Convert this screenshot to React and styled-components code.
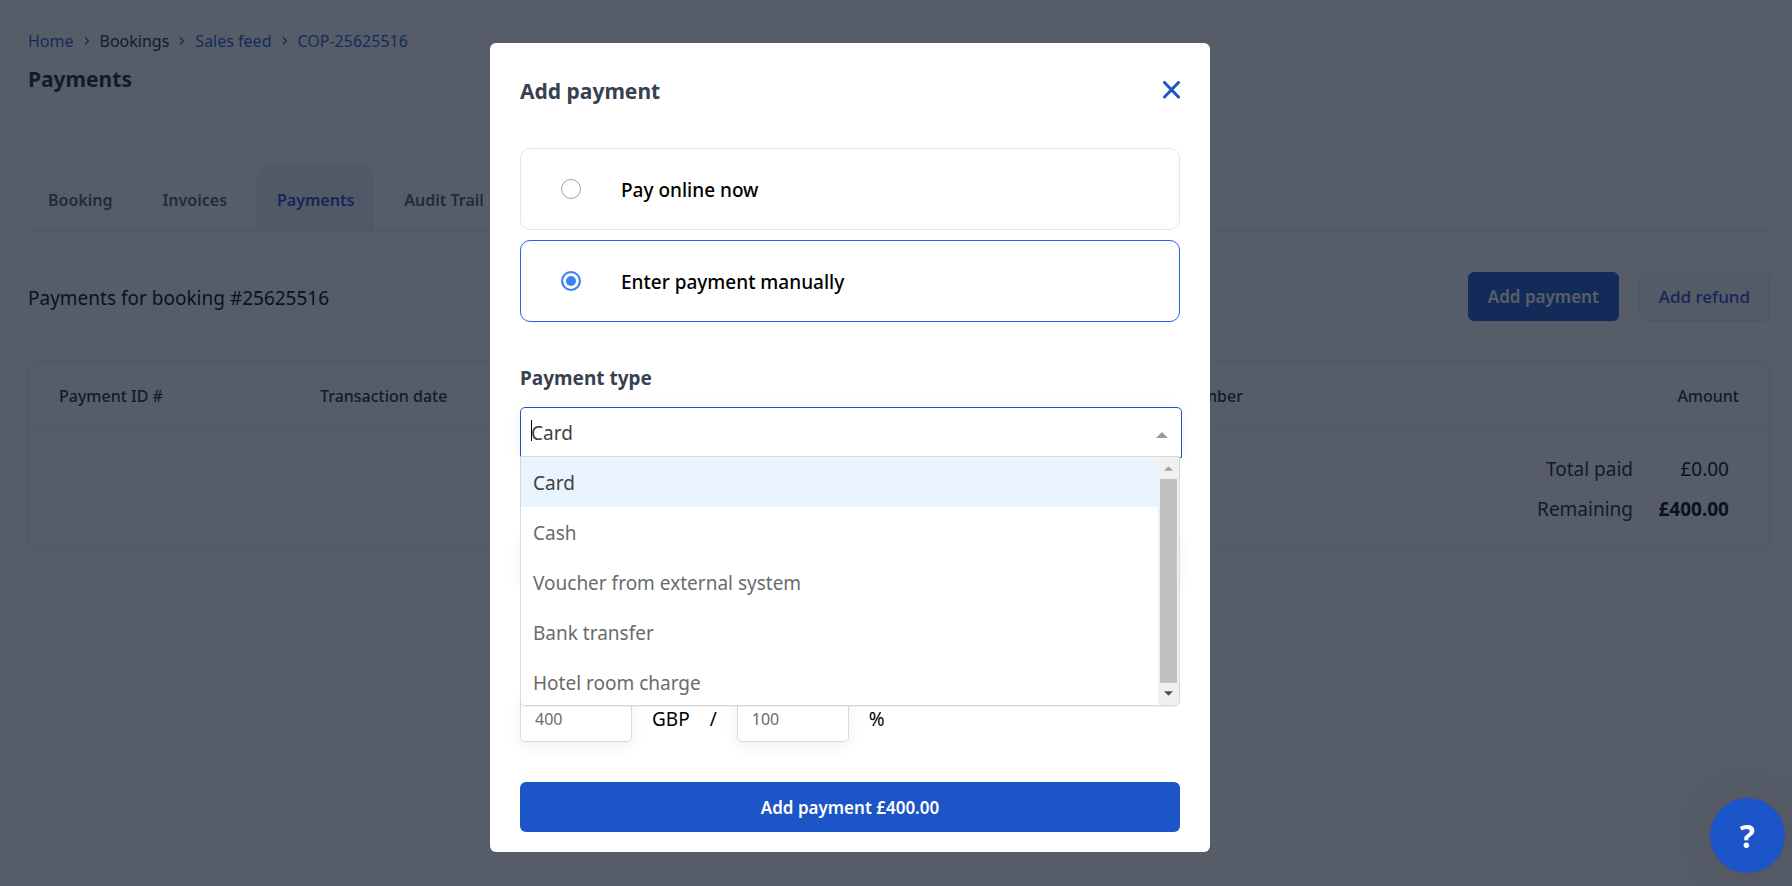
import React from "react";
import styled, { createGlobalStyle } from "styled-components";

const paymentTypes = [
  "Card",
  "Cash",
  "Voucher from external system",
  "Bank transfer",
  "Hotel room charge",
];

const Chevron = () => (
  <ChevronIcon viewBox="0 0 6 10" aria-hidden="true">
    <path d="M1 1.5L4.5 5L1 8.5" />
  </ChevronIcon>
);

export default function App() {
  return (
    <>
      <GlobalStyle />
      <Page>
        <PageHeader>
          <Breadcrumbs aria-label="Breadcrumb">
            <CrumbLink href="#home">Home</CrumbLink>
            <Chevron />
            <Crumb>Bookings</Crumb>
            <Chevron />
            <CrumbLink href="#sales">Sales feed</CrumbLink>
            <Chevron />
            <CrumbLink href="#booking">COP-25625516</CrumbLink>
          </Breadcrumbs>
          <PageTitle>Payments</PageTitle>
        </PageHeader>
        <Content>
          <Tabs>
            <Tab href="#booking">Booking</Tab>
            <Tab href="#invoices">Invoices</Tab>
            <Tab href="#payments" $active>
              Payments
            </Tab>
            <Tab href="#audit">Audit Trail</Tab>
          </Tabs>
          <Toolbar>
            <ToolbarText>Payments for booking #25625516</ToolbarText>
            <ToolbarButton type="button" $primary>
              Add payment
            </ToolbarButton>
            <ToolbarButton type="button">Add refund</ToolbarButton>
          </Toolbar>
          <TableCard>
            <Table>
              <colgroup>
                <Col $width="15%" />
                <Col $width="30%" />
                <Col />
                <Col $width="360px" />
                <Col $width="136px" />
              </colgroup>
              <thead>
                <tr>
                  <HeadCell>Payment ID #</HeadCell>
                  <HeadCell>Transaction date</HeadCell>
                  <HeadCell $right>Card number</HeadCell>
                  <HeadCell aria-hidden="true" />
                  <HeadCell $right>Amount</HeadCell>
                </tr>
              </thead>
              <tbody>
                <tr>
                  <TotalLabel colSpan={4} scope="row">
                    Total paid
                  </TotalLabel>
                  <TotalValue>£0.00</TotalValue>
                </tr>
                <tr>
                  <TotalLabel colSpan={4} scope="row">
                    Remaining
                  </TotalLabel>
                  <TotalValue $bold>£400.00</TotalValue>
                </tr>
              </tbody>
            </Table>
          </TableCard>
        </Content>
      </Page>

      <Overlay>
        <Modal role="dialog" aria-modal="true" aria-labelledby="modal-title">
          <ModalHeader>
            <ModalTitle id="modal-title">Add payment</ModalTitle>
            <CloseButton type="button" aria-label="Close">
              <svg width="18" height="18" viewBox="0 0 18 18" aria-hidden="true">
                <path d="M2.5 1.5L16.5 16M16.5 1.5L2.5 16" />
              </svg>
            </CloseButton>
          </ModalHeader>
          <Options>
            <Option>
              <Radio type="radio" name="method" />
              <OptionText>Pay online now</OptionText>
            </Option>
            <Option $selected>
              <Radio type="radio" name="method" defaultChecked />
              <OptionText>Enter payment manually</OptionText>
            </Option>
          </Options>
          <FieldLabel htmlFor="payment-type">Payment type</FieldLabel>
          <Combo>
            <ComboInput
              id="payment-type"
              role="combobox"
              aria-expanded="true"
              aria-controls="payment-type-list"
              defaultValue="Card"
            />
            <Caret />
            <ComboArrow viewBox="0 0 12 6" aria-hidden="true">
              <path d="M0 6L6 0L12 6Z" />
            </ComboArrow>
            <Menu>
              <MenuList id="payment-type-list" role="listbox">
                {paymentTypes.map((type, i) => (
                  <MenuItem
                    key={type}
                    role="option"
                    aria-selected={i === 0}
                    $active={i === 0}
                  >
                    {type}
                  </MenuItem>
                ))}
              </MenuList>
              <Scrollbar>
                <ScrollArrow viewBox="0 0 10 5" $color="#a3a3a3">
                  <path d="M0 5L5 0L10 5Z" />
                </ScrollArrow>
                <Thumb />
                <ScrollArrow viewBox="0 0 10 5" $color="#505050">
                  <path d="M0 0L5 5L10 0Z" />
                </ScrollArrow>
              </Scrollbar>
            </Menu>
          </Combo>
          <ReferenceInput aria-label="Reference" />
          <AmountRow>
            <AmountInput aria-label="Amount in GBP" defaultValue="400" />
            <AmountText>GBP</AmountText>
            <AmountText>/</AmountText>
            <AmountInput aria-label="Amount in percent" defaultValue="100" />
            <AmountText>%</AmountText>
          </AmountRow>
          <SubmitButton type="button">Add payment £400.00</SubmitButton>
        </Modal>
      </Overlay>
      <HelpButton type="button" aria-label="Help">
        ?
      </HelpButton>
    </>
  );
}

const GlobalStyle = createGlobalStyle`
  *, *::before, *::after {
    box-sizing: border-box;
  }
  body {
    margin: 0;
    background-color: #fafbfc;
    color: #000000;
    font-family: "Noto Sans", "Open Sans", sans-serif;
    font-size: 19px;
    line-height: 24px;
  }
  button, input {
    font: inherit;
  }
`;
const Page = styled.div`
  min-height: 100vh;
`;
const PageHeader = styled.header`
  padding: 29px 28px 33px;
  border-bottom: 1px solid #f4f5f7;
  box-shadow: 0 2px 8px rgba(0, 0, 0, 0.03);
`;
const Breadcrumbs = styled.nav`
  display: flex;
  align-items: center;
  gap: 10px;
  font-size: 16px;
`;
const Crumb = styled.span`
  color: #1a202c;
`;
const CrumbLink = styled.a`
  color: #1c55c7;
  text-decoration: none;
`;
const ChevronIcon = styled.svg`
  width: 6px;
  height: 10px;
  fill: none;
  stroke: #4a5568;
  stroke-width: 1.3;
`;
const PageTitle = styled.h1`
  margin: 12px 0 0;
  color: #1a202c;
  font-size: 21px;
  font-weight: 700;
  line-height: 28px;
`;
const Content = styled.main`
  padding: 39px 22px 0 28px;
`;
const Tabs = styled.nav`
  display: flex;
  gap: 10px;
  border-bottom: 1px solid #e2e8f0;
`;
const Tab = styled.a`
  padding: 22px 20px 19px;
  border-radius: 10px 10px 0 0;
  background-color: ${(p) => (p.$active ? "#eceef8" : "transparent")};
  color: ${(p) => (p.$active ? "#1c45c7" : "#4a5568")};
  font-size: 16px;
  font-weight: 600;
  text-decoration: none;
`;
const Toolbar = styled.div`
  display: flex;
  align-items: center;
  gap: 20px;
  margin: 40px 0;
`;
const ToolbarText = styled.div`
  flex: 1;
  padding-top: 2px;
`;
const ToolbarButton = styled.button`
  height: 49px;
  padding: 1px 19px 0;
  border: 1px solid ${(p) => (p.$primary ? "#1c55c7" : "#e2e4e9")};
  border-radius: 6px;
  background-color: ${(p) => (p.$primary ? "#1c55c7" : "#f3f4f6")};
  color: ${(p) => (p.$primary ? "#ffffff" : "#1c45c7")};
  font-size: 17px;
  font-weight: ${(p) => (p.$primary ? 600 : 500)};
`;
const TableCard = styled.div`
  padding-bottom: 19px;
  border: 1px solid #e2e8f0;
  border-radius: 6px;
`;
const Table = styled.table`
  width: 100%;
  table-layout: fixed;
  border-spacing: 0;
`;
const Col = styled.col`
  width: ${(p) => p.$width || "auto"};
`;
const HeadCell = styled.th`
  height: 66px;
  padding: 2px 30px 0;
  border-bottom: 1px solid #e2e8f0;
  color: #1a202c;
  font-size: 16px;
  font-weight: 500;
  text-align: ${(p) => (p.$right ? "right" : "left")};
`;
const TotalLabel = styled.th`
  height: 40px;
  padding: 2px 0 0;
  color: #1a202c;
  font-weight: 400;
  text-align: right;
  tr:first-child > & {
    height: 60px;
    padding-top: 22px;
  }
`;
const TotalValue = styled.td`
  padding: 2px 40px 0 0;
  font-weight: ${(p) => (p.$bold ? 700 : 400)};
  text-align: right;
  tr:first-child > & {
    padding-top: 22px;
  }
`;
const Overlay = styled.div`
  position: fixed;
  inset: 0;
  display: flex;
  justify-content: center;
  align-items: flex-start;
  padding: 43px 92px 0 0;
  background-color: rgba(16, 26, 41, 0.7);
`;
const Modal = styled.section`
  display: flex;
  flex-direction: column;
  width: 100%;
  max-width: 720px;
  padding: 32px 30px 20px;
  border-radius: 6px;
  background-color: #ffffff;
`;
const ModalHeader = styled.div`
  display: flex;
  justify-content: space-between;
  align-items: center;
`;
const ModalTitle = styled.h2`
  margin: 0;
  color: #374151;
  font-size: 21px;
  font-weight: 700;
  line-height: 32px;
`;
const CloseButton = styled.button`
  display: flex;
  padding: 0 0 2px;
  border: none;
  background: none;
  stroke: #1c55c7;
  stroke-width: 3;
  stroke-linecap: round;
`;
const Options = styled.div`
  display: flex;
  flex-direction: column;
  gap: 10px;
  margin-top: 41px;
`;
const Option = styled.label`
  display: flex;
  align-items: center;
  gap: 40px;
  height: 82px;
  padding: 0 40px;
  border: 1px solid ${(p) => (p.$selected ? "#2563eb" : "#e2e8f0")};
  border-radius: 10px;
  font-weight: 500;
`;
const OptionText = styled.span`
  padding-top: 2px;
`;
const Radio = styled.input`
  appearance: none;
  width: 20px;
  height: 20px;
  margin: 0;
  border: 1px solid #94a3b8;
  border-radius: 50%;
  &:checked {
    border: 2px solid #3b82f6;
    background: #3b82f6;
    box-shadow: inset 0 0 0 3px #ffffff;
  }
`;
const FieldLabel = styled.label`
  margin-top: 44px;
  color: #374151;
  font-weight: 700;
`;
const Combo = styled.div`
  position: relative;
  margin-top: 17px;
`;
const ComboInput = styled.input`
  display: block;
  width: calc(100% + 2px);
  height: 51px;
  padding: 0 40px 0 10px;
  border: 1px solid #1c55c7;
  border-radius: 5px 5px 0 0;
  outline: none;
  background-color: #ffffff;
  box-shadow: 0 2px 16px rgba(0, 0, 0, 0.05);
  color: #404040;
`;
const Caret = styled.span`
  position: absolute;
  top: 13px;
  left: 11px;
  width: 1px;
  height: 21px;
  background-color: #000000;
`;
const ComboArrow = styled.svg`
  position: absolute;
  top: 25px;
  right: 12px;
  width: 12px;
  height: 6px;
  fill: #999999;
`;
const Menu = styled.div`
  position: absolute;
  z-index: 1;
  top: 49px;
  left: 0;
  right: 0;
  display: flex;
  height: 250px;
  border: 1px solid #d9d9d9;
  border-radius: 0 0 5px 5px;
  overflow: hidden;
  background-color: #ffffff;
  box-shadow: 0 1px 0 rgba(0, 0, 0, 0.06);
`;
const MenuList = styled.ul`
  flex: 1;
  margin: 0;
  padding: 0;
  list-style: none;
`;
const MenuItem = styled.li`
  padding: 14px 12px 12px;
  background-color: ${(p) => (p.$active ? "#e9f4ff" : "#ffffff")};
  color: ${(p) => (p.$active ? "#404040" : "#6b6b6b")};
`;
const Scrollbar = styled.div`
  display: flex;
  flex-direction: column;
  align-items: center;
  justify-content: space-between;
  width: 21px;
  padding: 9px 0;
  background-color: #f0f0f0;
`;
const ScrollArrow = styled.svg`
  width: 9px;
  height: 5px;
  fill: ${(p) => p.$color};
`;
const Thumb = styled.div`
  width: 17px;
  height: 204px;
  background-color: #c1c1c1;
`;
const ReferenceInput = styled.input`
  height: 50px;
  margin-top: 77px;
  border: 1px solid #d9d9d9;
  border-radius: 5px;
  box-shadow: 0 2px 16px rgba(0, 0, 0, 0.05);
`;
const AmountRow = styled.div`
  display: flex;
  align-items: center;
  gap: 20px;
  margin-top: 107px;
`;
const AmountInput = styled.input`
  width: 112px;
  height: 50px;
  padding: 4px 14px 0;
  border: 1px solid #d9d9d9;
  border-radius: 5px;
  background-color: #ffffff;
  box-shadow: 0 5px 16px rgba(0, 0, 0, 0.06);
  color: #6b6b6b;
  font-size: 16px;
`;
const AmountText = styled.span`
  padding-top: 4px;
`;
const SubmitButton = styled.button`
  height: 50px;
  margin-top: 40px;
  padding: 2px 20px 0;
  border: none;
  border-radius: 6px;
  background-color: #1c55c7;
  color: #ffffff;
  font-size: 17px;
  font-weight: 600;
`;
const HelpButton = styled.button`
  position: fixed;
  right: 7px;
  bottom: 13px;
  width: 75px;
  height: 75px;
  border: none;
  border-radius: 50%;
  background-color: #1c55c7;
  box-shadow: 0 0 30px rgba(80, 70, 80, 0.4);
  color: #ffffff;
  font-size: 32px;
  font-weight: 700;
`;
